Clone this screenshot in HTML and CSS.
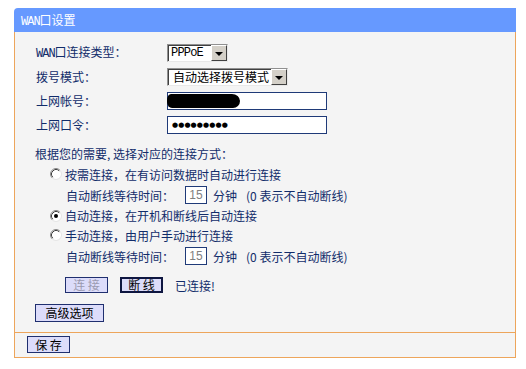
FILE: index.html
```html
<!DOCTYPE html>
<html lang="zh-CN">
<head>
<meta charset="utf-8">
<title>WAN口设置</title>
<link rel="stylesheet" href="styles.css">
</head>
<body>
<div class="panel">
  <div class="hd"><span class="lat">WAN</span>口设置</div>
  <div class="bd">
    <div class="row">
      <span class="lbl"><span class="lat">WAN</span>口连接类型：</span>
      <div class="sel s1"><span class="val lat2">PPPoE</span><span class="arr"><i></i></span></div>
    </div>
    <div class="row">
      <span class="lbl">拨号模式：</span>
      <div class="sel s2"><span class="val cjk">自动选择拨号模式</span><span class="arr"><i></i></span></div>
    </div>
    <div class="row">
      <span class="lbl">上网帐号：</span>
      <div class="txt"><span class="blob"></span></div>
    </div>
    <div class="row">
      <span class="lbl">上网口令：</span>
      <div class="txt"><span class="dots">●●●●●●●●●</span></div>
    </div>

    <div class="intro">根据您的需要, 选择对应的连接方式：</div>

    <div class="radio r1">
      <svg class="rb" width="12" height="12" viewBox="0 0 12 12"><circle cx="6" cy="6" r="5" fill="#fff"/><path d="M2.11 9.89A5.5 5.5 0 0 1 9.89 2.11" fill="none" stroke="#8a8a8a" stroke-width="1"/><path d="M9.89 2.11A5.5 5.5 0 0 1 2.11 9.89" fill="none" stroke="#e6e6e6" stroke-width="1"/><path d="M2.82 9.18A4.5 4.5 0 0 1 9.18 2.82" fill="none" stroke="#404040" stroke-width="1"/></svg>
      <span>按需连接，在有访问数据时自动进行连接</span>
    </div>
    <div class="wait w1">
      <span class="wl">自动断线等待时间：</span>
      <span class="num">15</span>
      <span class="unit">分钟</span>
      <span class="note">(0 表示不自动断线)</span>
    </div>
    <div class="radio r2">
      <svg class="rb" width="12" height="12" viewBox="0 0 12 12"><circle cx="6" cy="6" r="5" fill="#fff"/><path d="M2.11 9.89A5.5 5.5 0 0 1 9.89 2.11" fill="none" stroke="#8a8a8a" stroke-width="1"/><path d="M9.89 2.11A5.5 5.5 0 0 1 2.11 9.89" fill="none" stroke="#e6e6e6" stroke-width="1"/><path d="M2.82 9.18A4.5 4.5 0 0 1 9.18 2.82" fill="none" stroke="#404040" stroke-width="1"/><circle cx="6" cy="6" r="2" fill="#000"/></svg>
      <span>自动连接，在开机和断线后自动连接</span>
    </div>
    <div class="radio r3">
      <svg class="rb" width="12" height="12" viewBox="0 0 12 12"><circle cx="6" cy="6" r="5" fill="#fff"/><path d="M2.11 9.89A5.5 5.5 0 0 1 9.89 2.11" fill="none" stroke="#8a8a8a" stroke-width="1"/><path d="M9.89 2.11A5.5 5.5 0 0 1 2.11 9.89" fill="none" stroke="#e6e6e6" stroke-width="1"/><path d="M2.82 9.18A4.5 4.5 0 0 1 9.18 2.82" fill="none" stroke="#404040" stroke-width="1"/></svg>
      <span>手动连接，由用户手动进行连接</span>
    </div>
    <div class="wait w2">
      <span class="wl">自动断线等待时间：</span>
      <span class="num">15</span>
      <span class="unit">分钟</span>
      <span class="note">(0 表示不自动断线)</span>
    </div>

    <div class="btnrow">
      <button class="btn dis">连 接</button>
      <button class="btn focus">断 线</button>
      <span class="status">已连接!</span>
    </div>
    <div class="advrow">
      <button class="btn adv">高级选项</button>
    </div>
  </div>
  <div class="ft">
    <button class="btn save">保 存</button>
  </div>
</div>
</body>
</html>
```

FILE: styles.css
```css
html, body {
  margin: 0;
  padding: 0;
  background: #ffffff;
}
body {
  font-family: "Noto Sans CJK SC", "Noto Sans", sans-serif;
  font-size: 12px;
  color: #112c6a;
}
.panel {
  width: 502px;
  margin: 8px 0 0 14px;
}
.lat {
  font-family: "Liberation Mono", monospace;
  font-size: 12px;
  letter-spacing: -1px;
}
.hd {
  height: 24px;
  line-height: 24px;
  background: #6699ff;
  color: #ffffff;
  border-top-left-radius: 4px;
  padding-left: 7px;
}
.bd {
  background: #f4f4f4;
  border-left: 1px solid #eda55b;
  border-right: 1px solid #eda55b;
  border-bottom: 1px solid #eda55b;
  padding: 9px 0 10px 21px;
}
.ft {
  height: 25px;
  box-sizing: border-box;
  background: #f4f4f4;
  border-left: 1px solid #eda55b;
  border-right: 1px solid #eda55b;
  border-bottom: 1px solid #eda55b;
  padding: 3px 0 0 12px;
}
.row {
  display: flex;
  align-items: center;
  height: 24px;
}
.lbl {
  width: 131px;
  line-height: 16px;
}
.sel {
  display: flex;
  height: 18px;
  box-sizing: border-box;
  border: 1px solid;
  border-color: #909090 #e8e8e8 #e8e8e8 #909090;
  background: #ffffff;
  box-shadow: inset 1px 1px 0 #404040;
}
.s1 { width: 61px; }
.s2 { width: 121px; }
.val {
  flex: 1;
  color: #000000;
  line-height: 16px;
}
.lat2 {
  font-family: "Liberation Mono", monospace;
  font-size: 12px;
  letter-spacing: -0.8px;
  padding-left: 3px;
}
.cjk {
  padding-left: 5px;
}
.arr {
  width: 16px;
  height: 16px;
  box-sizing: border-box;
  background: #d4d0c8;
  border: 1px solid;
  border-color: #ffffff #404040 #404040 #ffffff;
  display: flex;
  align-items: center;
  justify-content: center;
}
.arr i {
  width: 0;
  height: 0;
  border-left: 4px solid transparent;
  border-right: 4px solid transparent;
  border-top: 4px solid #000000;
  margin-top: 1px;
}
.txt {
  width: 160px;
  height: 18px;
  box-sizing: border-box;
  border: 1px solid #1f3a78;
  background: #ffffff;
  display: flex;
  align-items: center;
}
.blob {
  display: inline-block;
  width: 73px;
  height: 14px;
  margin-left: -1px;
  background: #000000;
  border-radius: 4px 8px 7px 5px / 6px 7px 7px 6px;
}
.dots {
  font-family: "DejaVu Sans", sans-serif;
  font-size: 7px;
  letter-spacing: 0.1px;
  color: #000000;
  padding-left: 4px;
  line-height: 16px;
}
.intro {
  margin: 7px 0 0 -1px;
  height: 20px;
  line-height: 20px;
}
.radio {
  display: flex;
  align-items: center;
  padding-left: 14px;
  height: 20px;
}
.radio .rb {
  margin-right: 3px;
  flex: none;
}
.r2 { height: 19px; }
.wait {
  display: flex;
  align-items: center;
  padding-left: 30px;
  height: 22px;
}
.wl { width: 119px; }
.num {
  width: 22px;
  height: 18px;
  box-sizing: border-box;
  border: 1px solid #1f3a78;
  background: #ffffff;
  color: #808080;
  font-family: "Liberation Sans", sans-serif;
  font-size: 12px;
  line-height: 16px;
  text-align: center;
}
.unit { margin-left: 6px; width: 33px; }
.note { font-size: 12px; }
.btnrow {
  display: flex;
  align-items: center;
  margin-top: 10px;
  padding-left: 29px;
  height: 16px;
  gap: 12px;
}
.btn {
  font-family: "Noto Sans CJK SC", sans-serif;
  font-size: 12px;
  line-height: 14px;
  padding: 0;
  margin: 0;
  width: 43px;
  height: 16px;
  box-sizing: border-box;
  background: #dcdcfa;
  border: 1px solid #1f2f6f;
  color: #000000;
}
.dis { color: #9a9ab0; }
.focus {
  border: 2px solid #0e1640;
  line-height: 12px;
}
.status { color: #112c6a; }
.advrow {
  margin: 11px 0 0 -1px;
  height: 18px;
}
.adv {
  width: 69px;
  height: 18px;
  line-height: 16px;
}
.save {
  height: 17px;
  line-height: 15px;
}
```
